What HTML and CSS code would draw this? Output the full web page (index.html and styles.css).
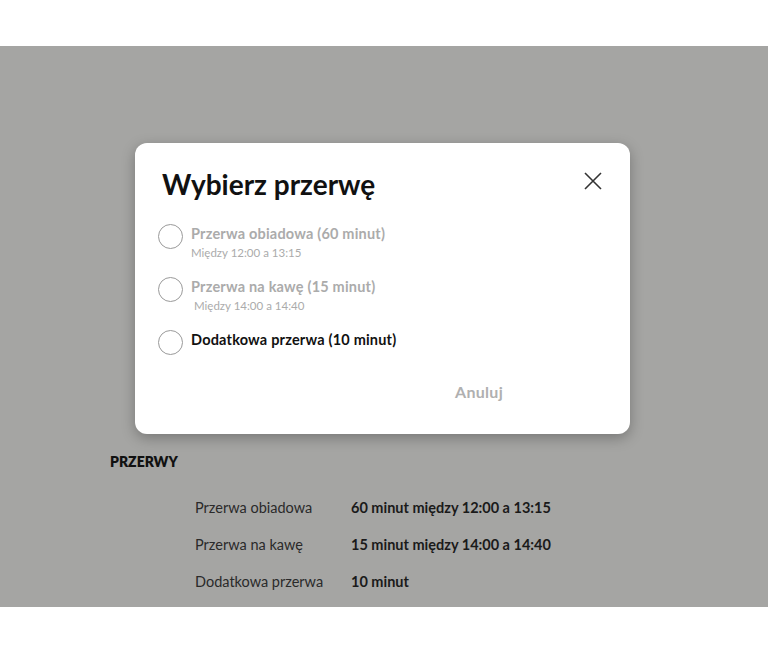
FILE: index.html
```html
<!DOCTYPE html>
<html lang="pl">
<head>
    <meta charset="UTF-8">
    <meta name="viewport" content="width=device-width, initial-scale=1.0">
    <title>Przerwy</title>
    <link rel="stylesheet" href="styles.css">
</head>
<body>
    <div class="top-bar"></div>

    <div class="backdrop">
        <!-- Modal -->
        <div class="modal">
            <div class="modal-header">
                <h2>Wybierz przerwę</h2>
                <button class="close-btn" aria-label="Zamknij">
                    <svg width="18" height="18" viewBox="0 0 18 18">
                        <path d="M1 1 L17 17 M17 1 L1 17" stroke="#333" stroke-width="1.6" fill="none"/>
                    </svg>
                </button>
            </div>

            <ul class="break-options">
                <li class="option disabled">
                    <span class="radio"></span>
                    <div class="option-text">
                        <div class="option-title">Przerwa obiadowa (60 minut)</div>
                        <div class="option-sub">Między 12:00 a 13:15</div>
                    </div>
                </li>
                <li class="option disabled">
                    <span class="radio"></span>
                    <div class="option-text">
                        <div class="option-title">Przerwa na kawę (15 minut)</div>
                        <div class="option-sub indent">Między 14:00 a 14:40</div>
                    </div>
                </li>
                <li class="option">
                    <span class="radio"></span>
                    <div class="option-text">
                        <div class="option-title">Dodatkowa przerwa (10 minut)</div>
                    </div>
                </li>
            </ul>

            <div class="modal-footer">
                <button class="cancel-btn">Anuluj</button>
            </div>
        </div>

        <!-- Page content under the overlay -->
        <div class="breaks">
            <h3>PRZERWY</h3>
            <div class="breaks-table">
                <div class="break-name">Przerwa obiadowa</div>
                <div class="break-value">60 minut między 12:00 a 13:15</div>
                <div class="break-name">Przerwa na kawę</div>
                <div class="break-value">15 minut między 14:00 a 14:40</div>
                <div class="break-name">Dodatkowa przerwa</div>
                <div class="break-value">10 minut</div>
            </div>
        </div>
    </div>

    <div class="bottom-bar"></div>
</body>
</html>
```

FILE: styles.css
```css
body {
    font-family: Lato, "Noto Sans", sans-serif;
    background-color: white;
    color: #111;
    margin: 0;
    padding: 0;
}

.top-bar {
    height: 46px;
    background-color: white;
}

.bottom-bar {
    height: 46px;
    background-color: white;
}

.backdrop {
    height: 561px;
    background-color: #a5a5a3;
    overflow: hidden;
    padding-top: 97px;
    box-sizing: border-box;
}

.modal {
    width: 495px;
    height: 291px;
    margin-left: 135px;
    box-sizing: border-box;
    background-color: white;
    border-radius: 12px;
    box-shadow: 0px 4px 14px rgba(0, 0, 0, 0.28);
    padding: 24px 28px 0 23px;
    display: flex;
    flex-direction: column;
}

.modal-header {
    display: flex;
    justify-content: space-between;
    align-items: center;
}

.modal-header h2 {
    margin: 0 0 0 4px;
    font-size: 28px;
    line-height: 34px;
    font-weight: 700;
    color: #111;
}

.close-btn {
    background: none;
    border: none;
    padding: 0;
    margin-top: -6px;
    width: 18px;
    height: 18px;
    display: flex;
    cursor: pointer;
}

.break-options {
    list-style-type: none;
    margin: 24px 0 0 0;
    padding: 0;
    display: flex;
    flex-direction: column;
    gap: 18px;
}

.option {
    display: flex;
    align-items: flex-start;
    gap: 8px;
}

.radio {
    width: 23px;
    height: 23px;
    border: 1px solid #9a9a9a;
    border-radius: 50%;
    flex-shrink: 0;
    margin-top: -1px;
}

.option-title {
    font-size: 14.5px;
    line-height: 18px;
    font-weight: 700;
    letter-spacing: 0.2px;
    color: #111;
}

.option.disabled .option-title {
    color: #ababab;
}

.option-sub {
    font-size: 11.5px;
    line-height: 15px;
    color: #ababab;
    margin-top: 2px;
}

.option-sub.indent {
    padding-left: 3px;
}

.modal-footer {
    margin-top: auto;
    padding-bottom: 32px;
    display: flex;
    justify-content: flex-end;
}

.cancel-btn {
    background: none;
    border: none;
    padding: 0;
    margin-right: 99px;
    font-family: inherit;
    font-size: 16px;
    line-height: 20px;
    font-weight: 700;
    letter-spacing: 0.3px;
    color: #b0b0b0;
    cursor: pointer;
}

.breaks {
    padding-left: 110px;
    margin-top: 19px;
}

.breaks h3 {
    margin: 0;
    font-size: 14px;
    line-height: 18px;
    font-weight: 800;
    color: #111;
}

.breaks-table {
    display: grid;
    grid-template-columns: 156px auto;
    row-gap: 19px;
    margin: 28px 0 0 85px;
}

.break-name {
    font-size: 14.5px;
    line-height: 18px;
    color: #2a2a2a;
}

.break-value {
    font-size: 14.5px;
    line-height: 18px;
    font-weight: 700;
    color: #1a1a1a;
}
```
